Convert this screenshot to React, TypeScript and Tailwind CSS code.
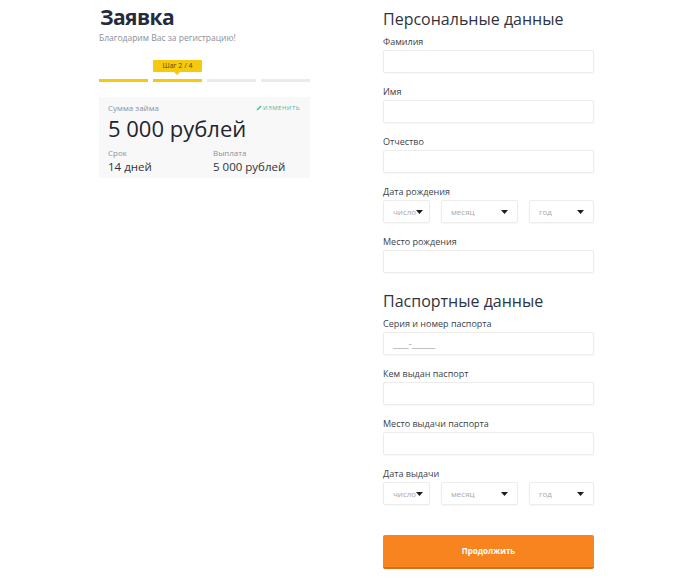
import React from "react";

const font = { fontFamily: '"Open Sans", "Noto Sans", Arial, sans-serif' };

function Label({ children }: { children: React.ReactNode }) {
  return <div className="text-[9px] leading-[12px] text-[#3a3f4b] mb-[2px]">{children}</div>;
}

function Input({ placeholder }: { placeholder?: string }) {
  return (
    <div className="h-[23px] w-full bg-white border border-[#ececec] rounded-[2px] shadow-[0_1px_2px_rgba(0,0,0,0.04)] flex items-center px-[9px] text-[9px] text-[#9a9a9a]">
      {placeholder}
    </div>
  );
}

function Arrow() {
  return (
    <svg width="7" height="4" viewBox="0 0 7 4" className="shrink-0">
      <path d="M0 0 L7 0 L3.5 4 Z" fill="#1d1d1d" />
    </svg>
  );
}

const selBox = "h-full border border-[#ececec] rounded-[2px] shadow-[0_1px_2px_rgba(0,0,0,0.04)] flex items-center text-[8px] text-[#a8a8a8]";

function Selects() {
  return (
    <div className="flex h-[23px]">
      <div className={`w-[47px] pl-[9px] ${selBox}`}>
        <span>число</span>
        <Arrow />
      </div>
      <div className={`ml-[11px] w-[77px] justify-between px-[9px] ${selBox}`}>
        <span>месяц</span>
        <Arrow />
      </div>
      <div className={`ml-[11px] w-[65px] justify-between px-[9px] ${selBox}`}>
        <span>год</span>
        <Arrow />
      </div>
    </div>
  );
}

function Field({ label, placeholder }: { label: string; placeholder?: string }) {
  return (
    <div className="mb-[13px]">
      <Label>{label}</Label>
      <Input placeholder={placeholder} />
    </div>
  );
}

export default function App() {
  return (
    <div className="w-[680px] h-[579px] bg-white flex pl-[99px]" style={font}>
      <div className="w-[211px] shrink-0">
        <h1 className="text-[21px] leading-[26px] font-bold text-[#262b3d] mt-[4px] tracking-[-0.6px] pl-[1px]">Заявка</h1>
        <p className="text-[8.5px] leading-[12px] text-[#8b8f98] mt-[2px]">Благодарим Вас за регистрацию!</p>
        <div className="ml-[54px] mt-[16px] relative bg-[#f6c90e] w-[49px] h-[12px] rounded-[1px] flex items-center justify-center text-[7px] text-[#5a4b00]">
          Шаг 2 / 4
          <div className="absolute left-[21px] -bottom-[3px] w-0 h-0 border-l-[3px] border-r-[3px] border-t-[3px] border-l-transparent border-r-transparent border-t-[#f6c90e]" />
        </div>
        <div className="flex gap-[5px] mt-[7px]">
          <div className="h-[3px] flex-1 bg-[#f6c90e]" />
          <div className="h-[3px] flex-1 bg-[#f6c90e]" />
          <div className="h-[3px] flex-1 bg-[#ebebeb]" />
          <div className="h-[3px] flex-1 bg-[#ebebeb]" />
        </div>
        <div className="mt-[15px] bg-[#f8f8f8] h-[81px] px-[9px] pt-[5px]">
          <div className="flex justify-between items-center">
            <span className="text-[8px] leading-[12px] text-[#8e9199]">Сумма займа</span>
            <span className="text-[6px] leading-[12px] text-[#4bb8a9] tracking-[0.5px] flex items-center gap-[1px] mr-[1px]">
              <svg width="6" height="6" viewBox="0 0 6 6"><path d="M0.5 5.5 L1 4 L4.5 0.5 L5.5 1.5 L2 5 Z" fill="#4bb8a9" /></svg>
              ИЗМЕНИТЬ
            </span>
          </div>
          <div className="text-[22px] leading-[24px] text-[#22252e] mt-[2px]">5 000 рублей</div>
          <div className="flex mt-[7px]">
            <div className="w-[105px]">
              <div className="text-[8px] leading-[12px] text-[#8e9199]">Срок</div>
              <div className="text-[11.5px] leading-[15px] text-[#2f3340]">14 дней</div>
            </div>
            <div>
              <div className="text-[8px] leading-[12px] text-[#8e9199]">Выплата</div>
              <div className="text-[11.5px] leading-[15px] text-[#2f3340]">5 000 рублей</div>
            </div>
          </div>
        </div>
      </div>

      <div className="w-[211px] ml-[73px] shrink-0">
        <h2 className="text-[16px] leading-[20px] text-[#30343f] mt-[9px] mb-[7px]">Персональные данные</h2>
        <Field label="Фамилия" />
        <Field label="Имя" />
        <Field label="Отчество" />
        <div className="mb-[13px]">
          <Label>Дата рождения</Label>
          <Selects />
        </div>
        <Field label="Место рождения" />
        <h2 className="text-[16px] leading-[20px] text-[#30343f] mt-[18px] mb-[7px]">Паспортные данные</h2>
        <Field label="Серия и номер паспорта" placeholder="____-______" />
        <Field label="Кем выдан паспорт" />
        <Field label="Место выдачи паспорта" />
        <div>
          <Label>Дата выдачи</Label>
          <Selects />
        </div>
        <button className="mt-[30px] w-full h-[34px] bg-[#f8841f] border-b-2 border-[#e06b10] rounded-[2px] text-white text-[8px] font-bold">
          Продолжить
        </button>
      </div>
    </div>
  );
}
